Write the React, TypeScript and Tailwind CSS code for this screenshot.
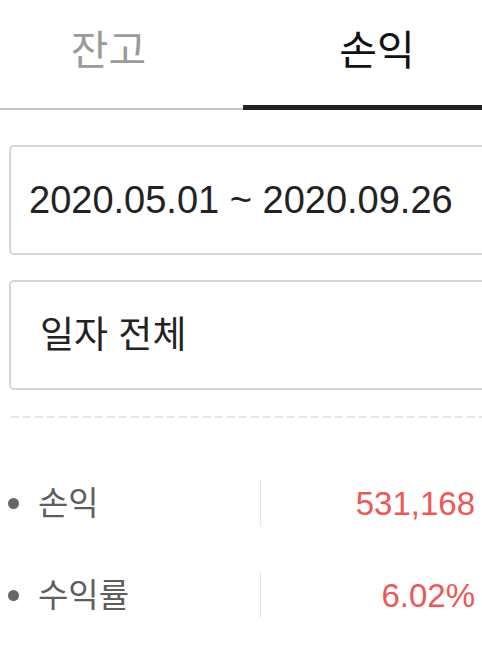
import React from "react";

const font = "font-['Liberation_Sans','Noto_Sans_CJK_KR',sans-serif]";

function Row({ label, value }: { label: string; value: string }) {
  return (
    <div className="flex h-[46px] items-center">
      <div className="flex w-[260px] items-center">
        <span className="ml-[8px] h-[11px] w-[11px] rounded-full bg-[#666666]" />
        <span className="ml-[19px] text-[33px] leading-none text-[#5e5e5e]">{label}</span>
      </div>
      <div className="h-full w-px bg-[#e4e4e4]" />
      <div className="flex-1 pr-[7px] text-right text-[33px] leading-none text-[#f05656]">{value}</div>
    </div>
  );
}

export default function App() {
  return (
    <div className={`relative h-[650px] w-[482px] overflow-hidden bg-white ${font}`}>
      {/* Tabs */}
      <div className="flex w-[520px]">
        <div className="box-border flex h-[110px] w-[243px] shrink-0 justify-center border-b-2 border-[#c4c4c4] pr-[26px] pt-[31px]">
          <span className="text-[41px] leading-[41px] text-[#9b9b9b]">잔고</span>
        </div>
        <div className="box-border flex h-[110px] w-[268px] shrink-0 justify-center border-b-[5px] border-[#222222] pt-[31px]">
          <span className="text-[41px] leading-[41px] text-[#111111]">손익</span>
        </div>
      </div>

      {/* Date range */}
      <div className="ml-[9px] mt-[35px] box-border flex h-[110px] w-[520px] items-center rounded-[5px] border-2 border-[#d6d6d6] pl-[18px]">
        <span className="text-[38px] leading-none text-[#222222]">2020.05.01 ~ 2020.09.26</span>
      </div>

      {/* Period select */}
      <div className="ml-[9px] mt-[25px] box-border flex h-[110px] w-[520px] items-center rounded-[5px] border-2 border-[#d6d6d6] pl-[29px]">
        <span className="text-[37px] leading-none text-[#222222]">일자 전체</span>
      </div>

      {/* Dashed divider */}
      <div className="ml-[11px] mt-[26px] h-[2px] w-[480px] bg-[linear-gradient(to_right,#e6e6e6_8px,transparent_8px)] bg-[length:12px_2px]" />

      {/* Summary rows */}
      <div className="mt-[62px] flex flex-col gap-[46px]">
        <Row label="손익" value="531,168" />
        <Row label="수익률" value="6.02%" />
      </div>
    </div>
  );
}
